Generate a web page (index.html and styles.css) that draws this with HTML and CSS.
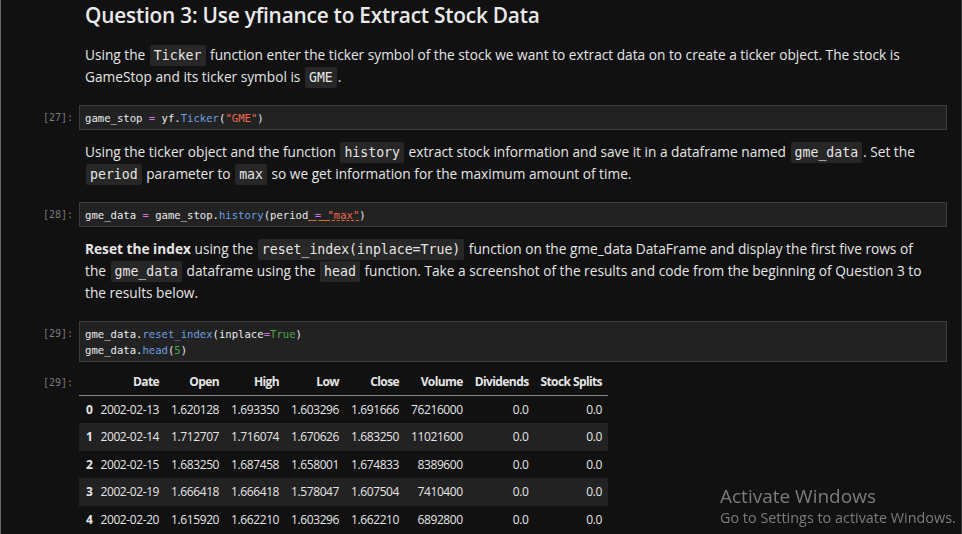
FILE: index.html
```html
<!DOCTYPE html>
<html>
<head>
<meta charset="utf-8">
<link rel="stylesheet" href="styles.css">
</head>
<body>
<div class="nb">
  <div class="cell md">
    <div class="prompt"></div>
    <div class="content">
      <h2>Question 3: Use yfinance to Extract Stock Data</h2>
      <p>Using the <code>Ticker</code> function enter the ticker symbol of the stock we want to extract data on to create a ticker object. The stock is GameStop and its ticker symbol is <code>GME</code>.</p>
    </div>
  </div>
  <div class="cell code c1">
    <div class="prompt">[27]:</div>
    <div class="input"><pre>game_stop <span class="op">=</span> yf<span class="op2">.</span><span class="fn">Ticker</span>(<span class="str">"GME"</span>)</pre></div>
  </div>
  <div class="cell md">
    <div class="prompt"></div>
    <div class="content">
      <p>Using the ticker object and the function <code>history</code> extract stock information and save it in a dataframe named <code>gme_data</code>. Set the <code>period</code> parameter to <code>max</code> so we get information for the maximum amount of time.</p>
    </div>
  </div>
  <div class="cell code c2">
    <div class="prompt">[28]:</div>
    <div class="input"><pre>gme_data <span class="op">=</span> game_stop<span class="op2">.</span><span class="fn">history</span>(period<span class="sq"> <span class="op">=</span> <span class="str">"max"</span></span>)</pre></div>
  </div>
  <div class="cell md">
    <div class="prompt"></div>
    <div class="content">
      <p><b>Reset the index</b> using the <code>reset_index(inplace=True)</code> function on the gme_data DataFrame and display the first five rows of the <code>gme_data</code> dataframe using the <code>head</code> function. Take a screenshot of the results and code from the beginning of Question 3 to the results below.</p>
    </div>
  </div>
  <div class="cell code c3">
    <div class="prompt">[29]:</div>
    <div class="input"><pre>gme_data<span class="op2">.</span><span class="fn">reset_index</span>(inplace<span class="op">=</span><span class="kw">True</span>)
gme_data<span class="op2">.</span><span class="fn">head</span>(<span class="num">5</span>)</pre></div>
  </div>
  <div class="cell out">
    <div class="prompt">[29]:</div>
    <div class="output">
      <table class="df">
        <thead>
          <tr><th></th><th>Date</th><th>Open</th><th>High</th><th>Low</th><th>Close</th><th>Volume</th><th>Dividends</th><th>Stock Splits</th></tr>
        </thead>
        <tbody>
          <tr><th>0</th><td>2002-02-13</td><td>1.620128</td><td>1.693350</td><td>1.603296</td><td>1.691666</td><td>76216000</td><td>0.0</td><td>0.0</td></tr>
          <tr><th>1</th><td>2002-02-14</td><td>1.712707</td><td>1.716074</td><td>1.670626</td><td>1.683250</td><td>11021600</td><td>0.0</td><td>0.0</td></tr>
          <tr><th>2</th><td>2002-02-15</td><td>1.683250</td><td>1.687458</td><td>1.658001</td><td>1.674833</td><td>8389600</td><td>0.0</td><td>0.0</td></tr>
          <tr><th>3</th><td>2002-02-19</td><td>1.666418</td><td>1.666418</td><td>1.578047</td><td>1.607504</td><td>7410400</td><td>0.0</td><td>0.0</td></tr>
          <tr><th>4</th><td>2002-02-20</td><td>1.615920</td><td>1.662210</td><td>1.603296</td><td>1.662210</td><td>6892800</td><td>0.0</td><td>0.0</td></tr>
        </tbody>
      </table>
    </div>
  </div>
</div>
<div class="activate">
  <div class="a1">Activate Windows</div>
  <div class="a2">Go to Settings to activate Windows.</div>
</div>
</body>
</html>
```
FILE: styles.css
```css
html, body {
  margin: 0;
  padding: 0;
  background: #111111;
  height: 534px;
  overflow: hidden;
}
body {
  font-family: "Open Sans", "Noto Sans", sans-serif;
  color: #e6e6e6;
  border-left: 1px solid #6b6b6b;
  border-right: 1px solid #3a3a3a;
  box-sizing: border-box;
  width: 962px;
}
.nb {
  display: flex;
  flex-direction: column;
  padding-right: 14px;
}
.cell {
  display: flex;
}
.prompt {
  width: 72px;
  flex: none;
  text-align: right;
  padding-right: 6px;
  font-family: "DejaVu Sans Mono", monospace;
  font-size: 10px;
  color: #7a7a7a;
}
.content {
  flex: 1;
  padding: 0 24px 0 6px;
}
h2 {
  margin: 0;
  padding-top: 0;
  font-size: 20.8px;
  font-weight: 600;
  line-height: 30px;
  letter-spacing: -0.2px;
  color: #eaeaea;
}
p {
  margin: 0;
  font-size: 13.7px;
  line-height: 22px;
}
h2 + p {
  margin-top: 14px;
}
code {
  font-family: "DejaVu Sans Mono", monospace;
  font-size: 13.2px;
  line-height: 1;
  background: #272727;
  padding: 3px 4px;
  border-radius: 2px;
  margin: 0 1px;
}
.input {
  flex: 1;
  background: #222222;
  border: 1px solid #3c3c3c;
  padding: 4px 5px 3px;
}
pre {
  margin: 0;
  font-family: "DejaVu Sans Mono", monospace;
  font-size: 10.6px;
  line-height: 16px;
  color: #ececec;
}
.code .prompt {
  padding-top: 5px;
  line-height: 16px;
}
.c1 { margin-top: 17px; margin-bottom: 11px; }
.c2 { margin-top: 17px; margin-bottom: 11px; }
.c3 { margin-top: 17px; margin-bottom: 6px; }
.op { color: #d36ee4; }
.fn { color: #6d9fe0; }
.str { color: #f2694d; }
.kw { color: #48a84b; }
.num { color: #48a84b; }
.sq { text-decoration: underline; text-decoration-color: #d07030; text-decoration-style: dashed; }
.out .prompt {
  padding-top: 7px;
  line-height: 16px;
}
.output {
  flex: 1;
}
table.df {
  border-collapse: collapse;
  font-size: 12px;
  font-family: "Open Sans", "Noto Sans", sans-serif;
  letter-spacing: -0.4px;
  color: #e6e6e6;
}
table.df th, table.df td {
  text-align: right;
  padding: 0 6px;
  white-space: nowrap;
}
table.df thead th {
  font-weight: 700;
  height: 27px;
  vertical-align: middle;
  border-bottom: 1px solid #8a8a8a;
  letter-spacing: -0.6px;
}
table.df tbody tr {
  height: 27.5px;
}
table.df tbody th {
  font-weight: 700;
  padding-left: 7px;
  padding-right: 2px;
}
table.df tbody tr:nth-child(even) {
  background: #222222;
}
.activate {
  position: fixed;
  left: 720px;
  top: 484px;
  color: #7c7c7c;
  font-family: "Open Sans", "Noto Sans", sans-serif;
}
.a1 {
  font-size: 19px;
  line-height: 24px;
}
.a2 {
  font-size: 14.4px;
  line-height: 20px;
}
```
